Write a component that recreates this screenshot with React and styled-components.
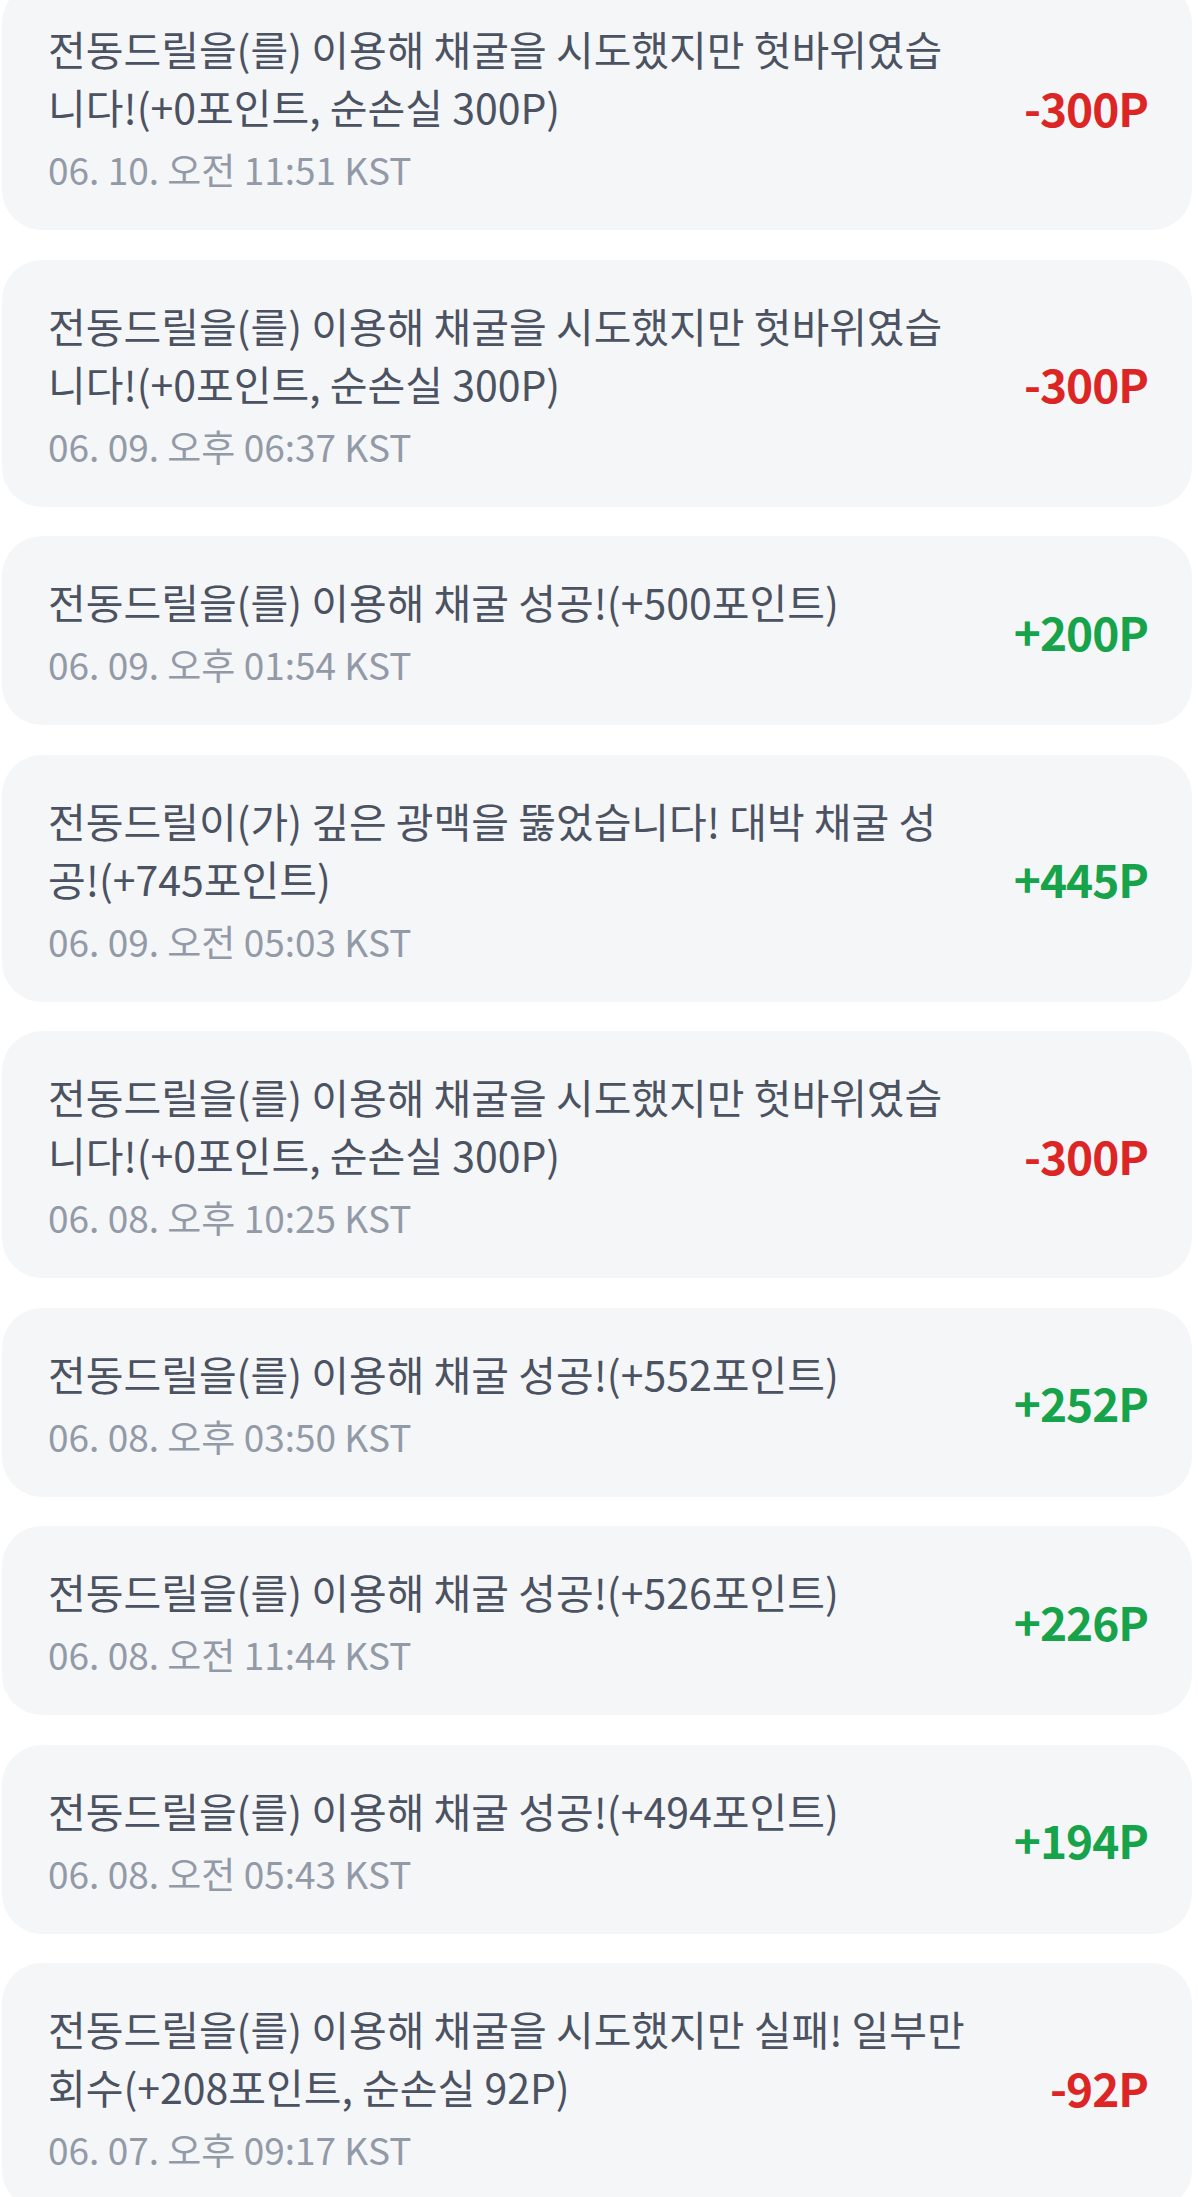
import React from 'react';
import styled, { createGlobalStyle } from 'styled-components';

const GlobalStyle = createGlobalStyle`
  html, body {
    margin: 0;
    padding: 0;
    background: #ffffff;
  }
  body {
    font-family: "Noto Sans CJK KR", "Noto Sans", sans-serif;
    overflow: hidden;
  }
`;

const records = [
  {
    text: '전동드릴을(를) 이용해 채굴을 시도했지만 헛바위였습니다!(+0포인트, 순손실 300P)',
    date: '06. 10. 오전 11:51 KST',
    amount: -300,
  },
  {
    text: '전동드릴을(를) 이용해 채굴을 시도했지만 헛바위였습니다!(+0포인트, 순손실 300P)',
    date: '06. 09. 오후 06:37 KST',
    amount: -300,
  },
  {
    text: '전동드릴을(를) 이용해 채굴 성공!(+500포인트)',
    date: '06. 09. 오후 01:54 KST',
    amount: 200,
  },
  {
    text: '전동드릴이(가) 깊은 광맥을 뚫었습니다! 대박 채굴 성공!(+745포인트)',
    date: '06. 09. 오전 05:03 KST',
    amount: 445,
  },
  {
    text: '전동드릴을(를) 이용해 채굴을 시도했지만 헛바위였습니다!(+0포인트, 순손실 300P)',
    date: '06. 08. 오후 10:25 KST',
    amount: -300,
  },
  {
    text: '전동드릴을(를) 이용해 채굴 성공!(+552포인트)',
    date: '06. 08. 오후 03:50 KST',
    amount: 252,
  },
  {
    text: '전동드릴을(를) 이용해 채굴 성공!(+526포인트)',
    date: '06. 08. 오전 11:44 KST',
    amount: 226,
  },
  {
    text: '전동드릴을(를) 이용해 채굴 성공!(+494포인트)',
    date: '06. 08. 오전 05:43 KST',
    amount: 194,
  },
  {
    text: '전동드릴을(를) 이용해 채굴을 시도했지만 실패! 일부만 회수(+208포인트, 순손실 92P)',
    date: '06. 07. 오후 09:17 KST',
    amount: -92,
  },
];

const List = styled.div`
  display: flex;
  flex-direction: column;
  gap: 29.5px;
  margin-top: -17px;
  padding-left: 2px;
  width: 1190px;
`;

const Card = styled.div`
  display: flex;
  align-items: center;
  background: #f5f6f8;
  border-radius: 40px;
  padding: 36px 44px 36px 46px;
`;

const Body = styled.div`
  width: 930px;
  display: flex;
  flex-direction: column;
`;

const Title = styled.div`
  font-size: 41px;
  line-height: 58px;
  color: #4b5261;
`;

const DateText = styled.div`
  margin-top: 10px;
  font-size: 37px;
  line-height: 49px;
  color: #939aa7;
`;

const Amount = styled.div`
  margin-left: auto;
  flex-shrink: 0;
  font-size: 46px;
  font-weight: 700;
  letter-spacing: -1px;
  color: ${(p) => (p.$loss ? '#dc2626' : '#16a34a')};
`;

const formatAmount = (n) => (n < 0 ? `-${Math.abs(n)}P` : `+${n}P`);

const App = () => (
  <>
    <GlobalStyle />
    <List>
      {records.map((r, i) => (
        <Card key={i}>
          <Body>
            <Title>{r.text}</Title>
            <DateText>{r.date}</DateText>
          </Body>
          <Amount $loss={r.amount < 0}>{formatAmount(r.amount)}</Amount>
        </Card>
      ))}
    </List>
  </>
);

export default App;
